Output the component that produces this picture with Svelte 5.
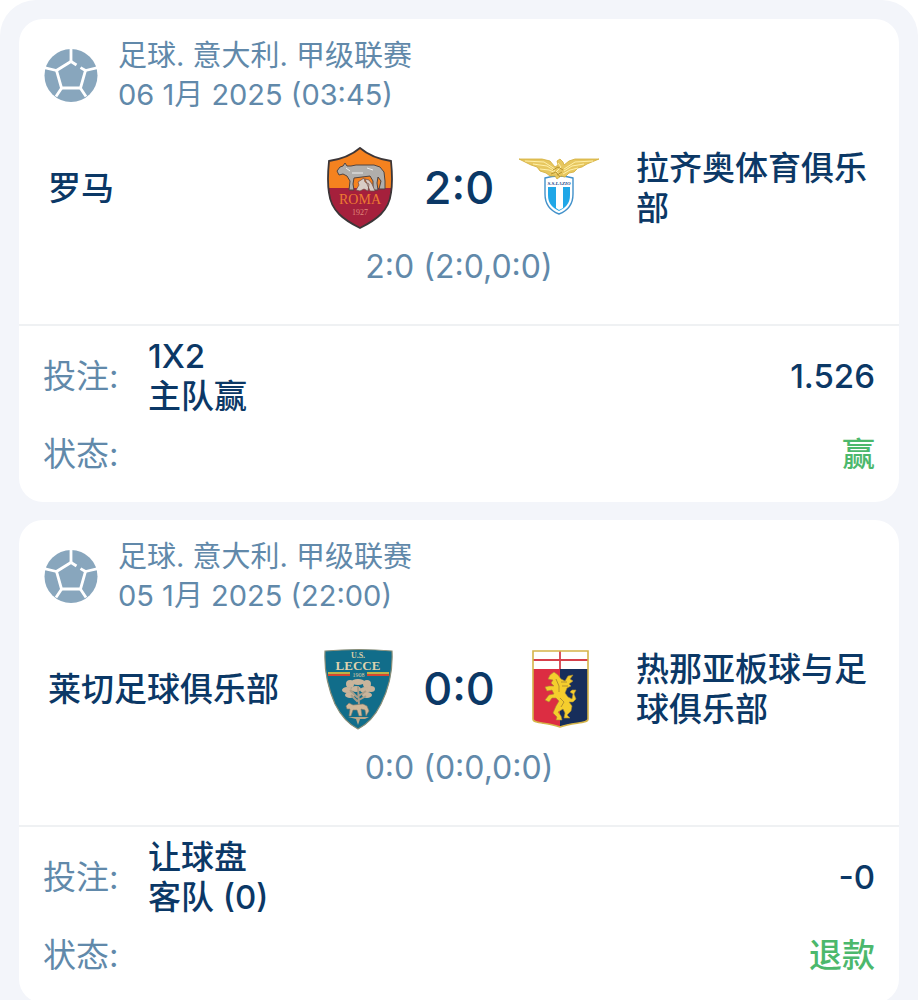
<script>
  const matches = [
    {
      league: '足球. 意大利. 甲级联赛',
      date: '06 1月 2025 (03:45)',
      home: '罗马', homeCrest: 'roma',
      away: '拉齐奥体育俱乐部', awayCrest: 'lazio',
      score: '2:0',
      periods: '2:0 (2:0,0:0)',
      market: '1X2', pick: '主队赢',
      odds: '1.526', status: '赢'
    },
    {
      league: '足球. 意大利. 甲级联赛',
      date: '05 1月 2025 (22:00)',
      home: '莱切足球俱乐部', homeCrest: 'lecce',
      away: '热那亚板球与足球俱乐部', awayCrest: 'genoa',
      score: '0:0',
      periods: '0:0 (0:0,0:0)',
      market: '让球盘', pick: '客队 (0)',
      odds: '-0', status: '退款'
    }
  ];
</script>

{#snippet ball()}
  <svg class="ball" viewBox="0 0 54 54" aria-hidden="true">
    <circle cx="27" cy="27.500" r="26.500" fill="#88a6bd" />
    <g fill="none" stroke="#fff" stroke-width="2.800">
      <path d="M32.500 17 27 13.500 12.500 22.500 17.500 40H36.500L41.500 22.500 36.500 19.600" />
      <path d="M27 0V14M0 19.500 12.500 22.500M54 19.500 41.500 22.500M12 48.500 18 39.500M42 48.500 36 39.500" />
    </g>
  </svg>
{/snippet}

{#snippet crest(name)}
  {#if name === 'roma'}
    <svg class="crest" viewBox="0 0 80 82" role="img" aria-label="Roma">
      <clipPath id="roma-shield"><path d="M41 1C34 7 24 12 10 14 9 24 8 34 10 46 12 64 25 73 41 81 57 73 70 64 72 46 74 34 73 24 72 14 58 12 48 7 41 1Z" /></clipPath>
      <g clip-path="url(#roma-shield)">
        <rect width="80" height="42" fill="#f5821f" />
        <rect y="41" width="80" height="42" fill="#a5203c" />
      </g>
      <path d="M41 1C34 7 24 12 10 14 9 24 8 34 10 46 12 64 25 73 41 81 57 73 70 64 72 46 74 34 73 24 72 14 58 12 48 7 41 1Z" fill="none" stroke="#3c3638" stroke-width="1.800" />
      <path d="M18 24 21 20 24 19 26 16 28 19 32 19 37 18 45 18 55 18 61 20 65 25 66 34 66 42 60 42 62 34 59 30 58 36 59 43 54 43 54 34 51 29 43 30 35 31 34 37 35 43 30 43 31 34 28 29 24 27 20 28Z" fill="#b0aeac" stroke="#514440" />
      <path d="M27 21 31 24M48 21 54 23M33 26 44 26" fill="none" stroke="#eee" />
      <path d="M42 33 45 31 46 35 50 37 49 44 45 42 41 44 37 43 40 38 39 35ZM46 32 50 33 53 37 56 44 51 44Z" fill="#d8ccc5" stroke="#6e4b43" stroke-width=".7" />
      <text x="41" y="57" text-anchor="middle" font-size="14" fill="#ed7b32">ROMA</text>
      <text x="41" y="68" text-anchor="middle" font-size="8" fill="#e18978">1927</text>
    </svg>
  {:else if name === 'lazio'}
    <svg class="crest" viewBox="0 0 80 82" role="img" aria-label="Lazio">
      <path d="M26 31Q40 27 54 31V47C54 58 48 64 40 67 32 64 26 58 26 47Z" fill="#fff" stroke="#4291ca" stroke-width="1.400" />
      <path d="M29 40H51V48C51 57 46 61 40 64 34 61 29 57 29 48Z" fill="#20a7e7" />
      <path d="M37 40H44V61L40 63 37 61Z" fill="#fff" />
      <text class="script" x="40" y="38" text-anchor="middle" font-size="5" fill="#174887">S.S.LAZIO</text>
      <path d="M0 12 23 12 31 14 36 20 39 18 38 14 41 12 44 15 45 18 50 14 56 12 80 12 68 17 63 20 59 21 55 25 50 26 46 30 42 29 38 32 36 29 31 29 27 26 21 24 18 20 12 18Z" fill="#e7c75f" stroke="#d3ad39" stroke-width=".8" />
      <path d="M6 14 25 15 36 22M14 17 28 19 36 24M21 22 30 23 37 26M74 14 56 15 45 22M65 17 53 19 45 24M59 21 51 23 44 27M39 16 42 20 37 25 41 27" fill="none" stroke="#fff0a9" />
      <path d="M34 23 39 20 44 23M32 27 37 25 41 30M43 25 38 28" fill="none" stroke="#b7942d" />
    </svg>
  {:else if name === 'lecce'}
    <svg class="crest" viewBox="0 0 80 82" role="img" aria-label="Lecce">
      <path d="M6 3Q40 0 73 3C74 23 70 40 62 56 56 68 49 76 39 81 29 76 22 68 16 56 9 40 5 23 6 3Z" fill="#116d8a" stroke="#8a8e78" stroke-width="1.200" />
      <text class="crest-bold" x="39" y="10" text-anchor="middle" font-size="8" fill="#d9cda8">U.S.</text>
      <text class="crest-bold" x="39" y="22" text-anchor="middle" font-size="13" fill="#ded2af">LECCE</text>
      <path d="M9 25H31M48 25H70" stroke="#f4cc32" stroke-width="1.500" />
      <path d="M9 27H31M48 27H70" stroke="#d64732" stroke-width="2" />
      <text x="39.500" y="29" text-anchor="middle" font-size="6" fill="#d9cda8">1908</text>
      <g fill="#c9b49b">
        <ellipse cx="39" cy="34" rx="7" ry="3" /><circle cx="31" cy="36" r="4" /><circle cx="48" cy="36" r="4" />
        <ellipse cx="28" cy="42" rx="5" ry="3" /><ellipse cx="37" cy="41" rx="5" ry="3" /><ellipse cx="46" cy="42" rx="5" ry="3" /><ellipse cx="52" cy="41" rx="4" ry="3" />
        <ellipse cx="31" cy="47" rx="5" ry="3" /><ellipse cx="48" cy="47" rx="5" ry="3" />
      </g>
      <path d="M39 38 40 58M31 42 38 49 47 43M32 47 38 53 47 48" fill="none" stroke="#a99d88" stroke-width="2" />
      <path d="M27 58 30 55 34 57 44 56 48 58 50 63 47 68 46 62 42 61 43 68 40 68 38 62 34 62 32 68 30 68 31 61 28 61Z" fill="#d0b899" stroke="#81786a" stroke-width=".6" />
      <path d="M29 69H50L46 71 41 71 39 77 37 71Z" fill="#b9a789" />
    </svg>
  {:else}
    <svg class="crest" viewBox="0 0 80 82" role="img" aria-label="Genoa">
      <path d="M14 3H69V71C69 76 54 74 41 79 28 74 14 76 14 71Z" fill="#172e5b" />
      <path d="M14 20H41V79C28 74 14 76 14 71Z" fill="#dc2d42" />
      <path d="M14 3H69V21H14Z" fill="#fff" />
      <path d="M14 12H69M41 3V21" stroke="#d6404b" stroke-width="1.800" />
      <path d="M14 3H69V71C69 76 54 74 41 79 28 74 14 76 14 71Z" fill="none" stroke="#d5b448" stroke-width="1.600" />
      <path d="M31 27 35 24 39 27 42 31 46 33 49 28 54 27 51 31 54 33 50 36 52 38 48 40 46 45 49 49 53 51 54 46 51 44 53 42 57 42 55 46 57 51 54 54 50 54 53 58 52 63 48 67 51 70 45 70 46 65 44 61 39 64 42 68 43 72 37 72 38 69 34 65 37 58 40 53 37 50 33 50 30 54 26 52 30 47 35 46 33 42 28 43 26 39 30 38 35 38 32 35 34 32 29 31Z" fill="#f5ce2d" stroke="#a98a34" stroke-width=".6" />
      <path d="M37 31 40 38 40 44M42 34 48 34M43 38 49 38M41 50 45 54 42 59" fill="none" stroke="#b4912c" />
    </svg>
  {/if}
{/snippet}

<main class="slip">
  {#each matches as m}
    <article class="card">
      <header class="head">
        {@render ball()}
        <div>
          <p>{m.league}</p>
          <p>{m.date}</p>
        </div>
      </header>
      <div class="teams">
        <h2 class="team">{m.home}</h2>
        {@render crest(m.homeCrest)}
        <strong class="score">{m.score}</strong>
        {@render crest(m.awayCrest)}
        <h2 class="team away">{m.away}</h2>
      </div>
      <p class="periods">{m.periods}</p>
      <dl class="bet">
        <div class="row">
          <dt>投注:</dt>
          <dd class="pick">{m.market}<br />{m.pick}</dd>
          <dd class="odds">{m.odds}</dd>
        </div>
        <div class="row">
          <dt>状态:</dt>
          <dd class="status">{m.status}</dd>
        </div>
      </dl>
    </article>
  {/each}
</main>

<style>
  :global(body) { background: #fff; }
  .slip {
    box-sizing: border-box;
    min-height: 100vh;
    padding: 19px 19px 0;
    display: flex;
    flex-direction: column;
    gap: 18px;
    border-radius: 36px 36px 0 0;
    background: #f3f5fa;
    color: #0b3866;
    font-family: Inter, "Noto Sans CJK SC", sans-serif;
    font-size: 33px;
    line-height: 40px;
  }
  p, h2, dl, dd { margin: 0; }
  .card {
    border-radius: 24px;
    background: #fff;
  }
  .head {
    display: flex;
    align-items: center;
    gap: 20px;
    padding: 17px 25px 0;
    color: #6189aa;
    font-size: 29px;
    line-height: 39px;
  }
  .ball { width: 54px; height: 54px; flex: none; }
  .teams {
    display: grid;
    grid-template-columns: minmax(0, 1fr) 80px 120px 80px minmax(0, 1fr);
    align-items: center;
    padding: 33px 29px 0;
  }
  .team { font-size: 33px; font-weight: 500; }
  .away { padding-left: 37px; margin-right: -2px; }
  .crest {
    width: 80px;
    height: 82px;
    font-family: "Liberation Serif", serif;
  }
  .script { font-style: italic; font-weight: 700; }
  .crest-bold { font-weight: 700; }
  .score {
    font-size: 45px;
    font-weight: 500;
    text-align: center;
  }
  .periods {
    padding: 18px 29px 37px;
    text-align: center;
    color: #6189aa;
    font-size: 32px;
  }
  .bet {
    margin: 0;
    padding: 10px 24px 28px;
    border-top: 2px solid #eff1f3;
    display: flex;
    flex-direction: column;
    gap: 18px;
  }
  .row { display: flex; align-items: center; }
  dt { width: 105px; color: #6189aa; }
  .pick { font-weight: 500; }
  .odds, .status { margin-left: auto; font-weight: 500; }
  .status { color: #4cb86c; }
</style>
